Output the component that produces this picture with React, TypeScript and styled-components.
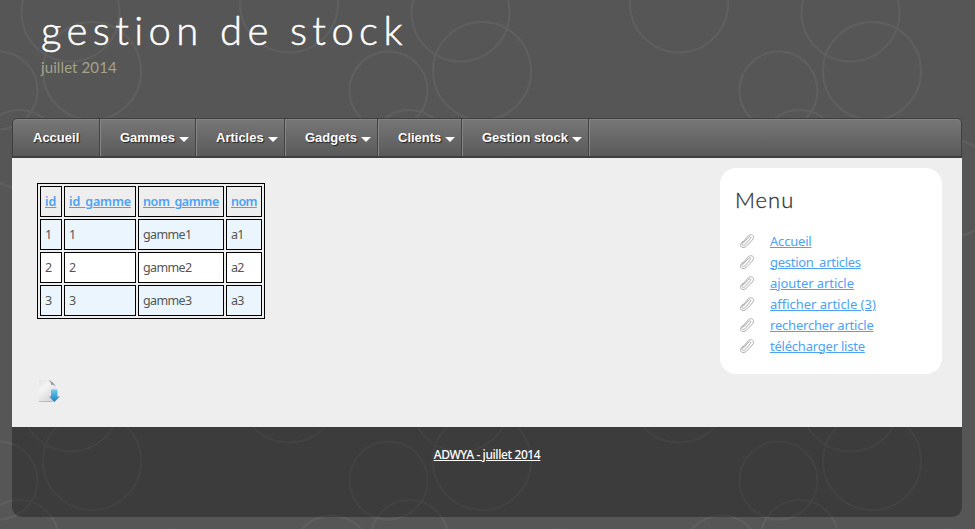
import React from "react";
import styled, { createGlobalStyle } from "styled-components";

const GlobalStyle = createGlobalStyle`
  * { box-sizing: border-box; }
  body {
    margin: 0;
    background: #565656;
    font-family: "Noto Sans", "Liberation Sans", sans-serif;
    font-size: 13px;
    color: #555;
  }
`;

const Page = styled.div`
  position: relative;
  height: 529px;
  padding: 0 13px 0 12px;
  overflow: hidden;
`;

const Backdrop = styled.svg`
  position: absolute;
  inset: 0;
  z-index: -1;
`;

const Header = styled.header`
  height: 118px;
  padding: 6px 0 0 29px;
  font-family: Lato, sans-serif;
`;

const Title = styled.h1`
  margin: 0;
  font-size: 40px;
  line-height: 48px;
  font-weight: 300;
  letter-spacing: 5.4px;
  color: #fff;
  -webkit-text-stroke: 0.5px #fff;
`;

const Subtitle = styled.p`
  margin: 2px 0 0;
  font-size: 15px;
  line-height: 22px;
  letter-spacing: 0.1px;
  color: #a3a38a;
`;

const Nav = styled.nav`
  display: flex;
  height: 40px;
  border: 1px solid #3f3f3f;
  border-bottom-width: 2px;
  border-radius: 5px 5px 0 0;
  background: linear-gradient(#777, #5a5a5a);
  box-shadow: inset 0 1px 0 #828282;
`;

const NavItem = styled.a<{ $width: number }>`
  display: flex;
  align-items: center;
  width: ${(p) => p.$width}px;
  padding-left: 20px;
  border-right: 1px solid #444;
  box-shadow: 1px 0 0 #858585;
  font: bold 13px "Liberation Sans", sans-serif;
  color: #fff;
  text-shadow: 1px 1px 1px #222;
  white-space: nowrap;
`;

const Caret = styled.i`
  margin: 4px 0 0 4px;
  border: 5px solid transparent;
  border-top-color: #fff;
  border-bottom: 0;
`;

const Content = styled.main`
  display: flex;
  justify-content: space-between;
  height: 269px;
  padding: 10px 20px 0 25px;
  background: #eee;
`;

const Main = styled.section`
  padding-top: 15px;
`;

const Table = styled.table`
  width: 228px;
  border: 1px solid #000;
  border-spacing: 2px;
  table-layout: fixed;
`;

const Row = styled.tr<{ $bg: string }>`
  background: ${(p) => p.$bg};
`;

const Cell = styled.td<{ $width?: number }>`
  width: ${(p) => (p.$width ? p.$width + "px" : "auto")};
  height: 31px;
  padding: 0 4px;
  border: 1px solid #000;
  font-size: 12.5px;
  line-height: 20px;
  white-space: nowrap;
  letter-spacing: -0.65px;
`;

const Link = styled.a<{ $track?: number; $bold?: boolean }>`
  color: #4da2f5;
  font-weight: ${(p) => (p.$bold ? 600 : 400)};
  letter-spacing: ${(p) => p.$track ?? 0}px;
  text-decoration: underline;
`;

const Download = styled.svg`
  display: block;
  margin: 60px 0 0 1px;
`;

const Sidebar = styled.aside`
  width: 222px;
  height: 206px;
  padding: 18px 15px;
  border-radius: 16px;
  background: #fff;
`;

const MenuTitle = styled.h2`
  margin: 0 0 14px;
  font: 300 22px/28px Lato, sans-serif;
  padding-bottom: 2px;
  letter-spacing: 1px;
  color: #333;
  -webkit-text-stroke: 0.3px #333;
`;

const MenuList = styled.ul`
  margin: 0;
  padding: 0;
  list-style: none;
`;

const MenuItem = styled.li`
  display: flex;
  align-items: center;
  gap: 15px;
  height: 21px;
  padding-left: 4px;
  white-space: nowrap;
`;

const Footer = styled.footer`
  height: 90px;
  padding-top: 18px;
  border-radius: 0 0 10px 10px;
  background: rgba(0, 0, 0, 0.3);
  text-align: center;
`;

const FooterLink = styled.a`
  color: #fff;
  font-size: 12px;
  line-height: 20px;
  font-weight: 500;
  letter-spacing: -0.4px;
  text-decoration: underline;
`;

const circles = [
  [70.5, 12.5, 49], [92, 71, 49], [-1.5, 90.5, 39], [388.5, 90.5, 39],
  [19.5, 149, 39], [409.5, 149, 39], [289, 3.5, 49], [331.5, 164.5, 39],
  [169, 188.5, 49],
];

const nav: [string, number][] = [
  ["Accueil", 87], ["Gammes", 96], ["Articles", 89],
  ["Gadgets", 93], ["Clients", 84], ["Gestion stock", 127],
];

const columns: [string, number, number][] = [
  ["id", 22, 0], ["id_gamme", 72, -0.15], ["nom_gamme", 86, -0.4], ["nom", 36, -0.6],
];

const rows = [
  ["1", "1", "gamme1", "a1"],
  ["2", "2", "gamme2", "a2"],
  ["3", "3", "gamme3", "a3"],
];

const menu: [string, number][] = [
  ["Accueil", -0.2], ["gestion_articles", -0.27], ["ajouter article", -0.07],
  ["afficher article (3)", -0.02], ["rechercher article", -0.2], ["télécharger liste", -0.22],
];

const Clip = () => (
  <svg width="16" height="16" viewBox="0 0 16 16" fill="none" stroke="#adadad" strokeWidth="1" strokeLinecap="round">
    <path d="M4.200 10.300 9.800 4.200c1.100-1.100 2.600.1 1.700 1.300L5.900 11.900c-1.700 1.700-4-.3-2.500-2.200L9.300 2.800c2.500-2.500 6.800-.2 4.900 3-.6 1-4.700 5.300-6.800 7.500-1.700 1.700-4.900 1.700-5.800-.2-.5-1.100-.1-2 .5-2.700L4 8.200" />
  </svg>
);

export default function App() {
  return (
    <Page>
      <GlobalStyle />
      <Backdrop width="975" height="529">
        <defs>
          <pattern id="rings" width="390" height="390" patternUnits="userSpaceOnUse">
            {circles.map(([x, y, r], i) => (
              <circle key={i} cx={x} cy={y} r={r} fill="none" stroke="#5f5f5f" strokeWidth="2" />
            ))}
          </pattern>
        </defs>
        <rect width="975" height="529" fill="url(#rings)" />
      </Backdrop>
      <Header>
        <Title>gestion de stock</Title>
        <Subtitle>juillet 2014</Subtitle>
      </Header>
      <Nav>
        {nav.map(([label, width], i) => (
          <NavItem key={label} $width={width}>
            {label}
            {i > 0 && <Caret />}
          </NavItem>
        ))}
      </Nav>
      <Content>
        <Main>
          <Table>
            <tbody>
              <tr>
                {columns.map(([name, width, track]) => (
                  <Cell key={name} $width={width}>
                    <Link $bold $track={track}>{name}</Link>
                  </Cell>
                ))}
              </tr>
              {rows.map((row, i) => (
                <Row key={i} $bg={i % 2 ? "#fff" : "#ebf5fd"}>
                  {row.map((value, j) => <Cell key={j}>{value}</Cell>)}
                </Row>
              ))}
            </tbody>
          </Table>
          <Download width="24" height="24" viewBox="0 0 24 24">
            <defs>
              <linearGradient id="paper" x2="0.6" y2="1">
                <stop offset="0" stopColor="#e4e4e4" />
                <stop offset="0.4" stopColor="#f4f4f4" />
                <stop offset="1" stopColor="#d8d8d8" />
              </linearGradient>
              <linearGradient id="arrow" x2="0" y2="1">
                <stop offset="0" stopColor="#6dcdf2" />
                <stop offset="1" stopColor="#1680bd" />
              </linearGradient>
            </defs>
            <path d="M1 1h10l6.500 6v15.500H1z" fill="url(#paper)" />
            <path d="M1 22.500h14" stroke="#bdbdbd" />
            <path d="M10 1c2.500.3 6 3 8 6.500-1.500-1.300-3.500-2-5-1.700.2-2-1-3.800-3-4.800z" fill="#999" />
            <path d="M13 10.500h6.500v7H22L16.300 23 11 17.500h2z" fill="url(#arrow)" />
          </Download>
        </Main>
        <Sidebar>
          <MenuTitle>Menu</MenuTitle>
          <MenuList>
            {menu.map(([label, track]) => (
              <MenuItem key={label}>
                <Clip />
                <Link $track={track}>{label}</Link>
              </MenuItem>
            ))}
          </MenuList>
        </Sidebar>
      </Content>
      <Footer>
        <FooterLink>ADWYA - juillet 2014</FooterLink>
      </Footer>
    </Page>
  );
}
